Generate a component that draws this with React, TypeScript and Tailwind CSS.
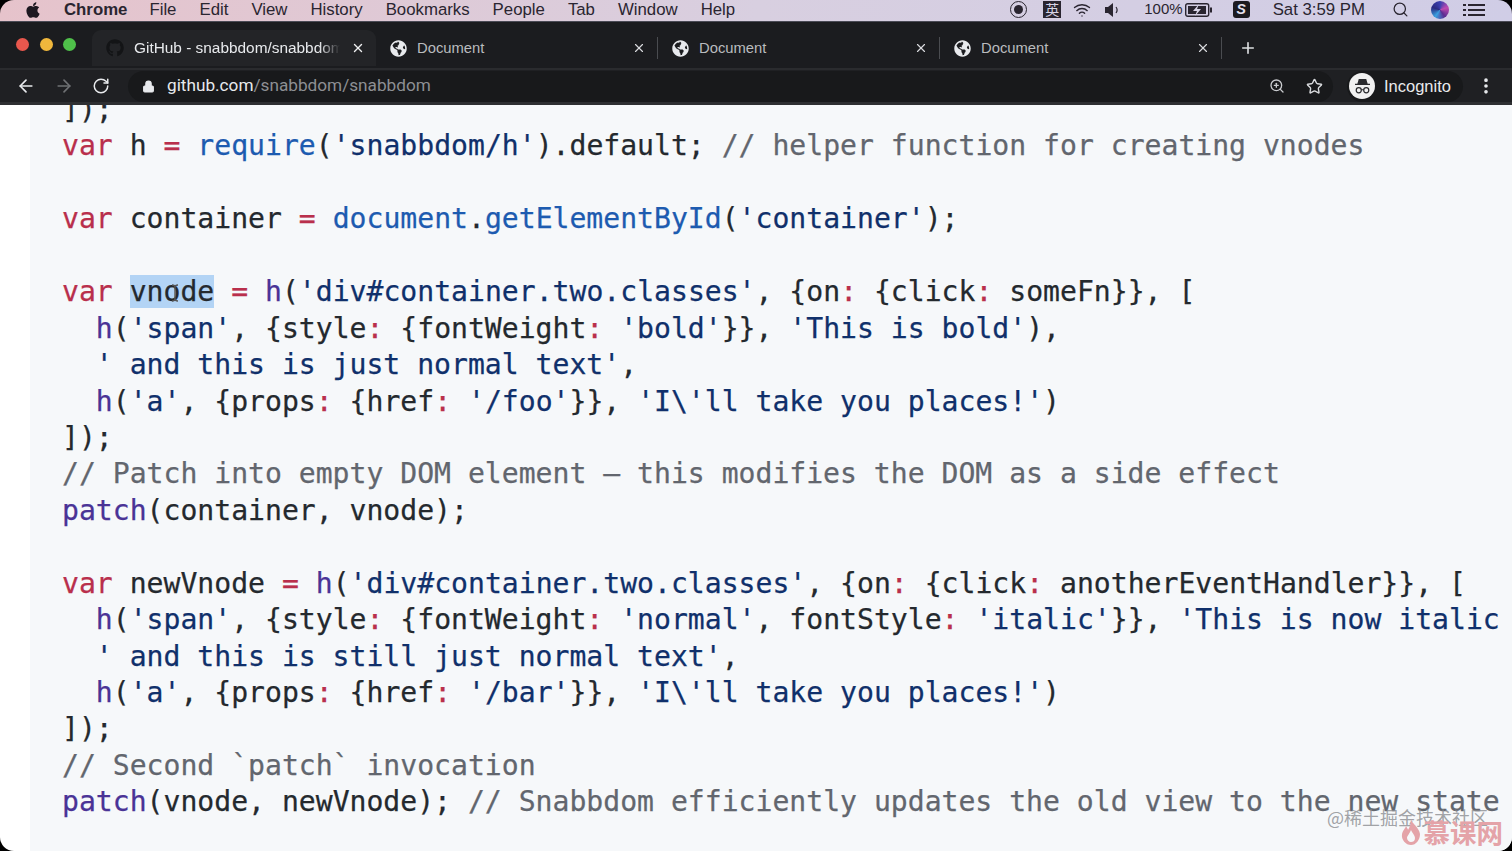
import { ArrowLeft, ArrowRight, Lock, MoreVertical, Plus, RotateCw, Search, Star, Wifi, X, ZoomIn } from 'lucide-react';
import { FaApple, FaGithub, FaGlobeAmericas } from 'react-icons/fa';

const kw = 'text-[#b92f4c]';
const fn = 'text-[#1d5bb0]';
const ent = 'text-[#4a3396]';
const str = 'text-[#10306b]';
const com = 'text-[#62666e]';

type Tok = [string, string?];

const lines: Tok[][] = [
	[[']);']],
	[['var', kw], [' h '], ['=', kw], [' '], ['require', fn], ['('], ["'snabbdom/h'", str], [').default; '], ['// helper function for creating vnodes', com]],
	[],
	[['var', kw], [' container '], ['=', kw], [' '], ['document', fn], ['.'], ['getElementById', fn], ['('], ["'container'", str], [');']],
	[],
	[['var', kw], [' '], ['vnode', 'SEL'], [' '], ['=', kw], [' '], ['h', ent], ['('], ["'div#container.two.classes'", str], [', {on'], [':', kw], [' {click'], [':', kw], [' someFn}}, [']],
	[['  '], ['h', ent], ['('], ["'span'", str], [', {style'], [':', kw], [' {fontWeight'], [':', kw], [' '], ["'bold'", str], ['}}, '], ["'This is bold'", str], ['),']],
	[['  '], ["' and this is just normal text'", str], [',']],
	[['  '], ['h', ent], ['('], ["'a'", str], [', {props'], [':', kw], [' {href'], [':', kw], [' '], ["'/foo'", str], ['}}, '], ["'I\\'ll take you places!'", str], [')']],
	[[']);']],
	[['// Patch into empty DOM element — this modifies the DOM as a side effect', com]],
	[['patch', ent], ['(container, vnode);']],
	[],
	[['var', kw], [' newVnode '], ['=', kw], [' '], ['h', ent], ['('], ["'div#container.two.classes'", str], [', {on'], [':', kw], [' {click'], [':', kw], [' anotherEventHandler}}, [']],
	[['  '], ['h', ent], ['('], ["'span'", str], [', {style'], [':', kw], [' {fontWeight'], [':', kw], [' '], ["'normal'", str], [', fontStyle'], [':', kw], [' '], ["'italic'", str], ['}}, '], ["'This is now italic", str]],
	[['  '], ["' and this is still just normal text'", str], [',']],
	[['  '], ['h', ent], ['('], ["'a'", str], [', {props'], [':', kw], [' {href'], [':', kw], [' '], ["'/bar'", str], ['}}, '], ["'I\\'ll take you places!'", str], [')']],
	[[']);']],
	[['// Second `patch` invocation', com]],
	[['patch', ent], ['(vnode, newVnode); '], ['// Snabbdom efficiently updates the old view to the new state', com]],
];

function MenuBar() {
	const left = ['File', 'Edit', 'View', 'History', 'Bookmarks', 'People', 'Tab', 'Window', 'Help'];
	return (
		<div className="h-[21px] shrink-0 flex items-center justify-between pb-[2px] bg-gradient-to-r from-[#e6c3cb] via-[#d8cfe0] to-[#d0cde6] text-[16.8px] text-[#2a2530]">
			<div className="flex items-center">
				<FaApple className="w-[18px] h-[18px] ml-[24px] text-[#1d1820]" />
				<span className="ml-[22px] font-bold">Chrome</span>
				<div className="flex items-center gap-[23px] ml-[22px]">
					{left.map((item) => (
						<span key={item}>{item}</span>
					))}
				</div>
			</div>
			<div className="flex items-center pr-[27px]">
				<span className="w-[17px] h-[17px] rounded-full border border-[#2a2530] flex items-center justify-center">
					<span className="w-[9px] h-[9px] rounded-full bg-[#2a2530]" />
				</span>
				<span className="ml-[16px] w-[18px] h-[17px] bg-[#2a2530] text-[#d8d4e6] text-[14px] leading-[17px] text-center font-['Noto_Sans_CJK_SC',sans-serif]">英</span>
				<Wifi className="ml-[9px] w-[24px] h-[18px]" strokeWidth={1.8} />
				<svg viewBox="0 0 16 14" className="ml-[11px] w-[16px] h-[14px]">
					<path d="M0 4h3l5-4v14l-5-4H0z" fill="#2a2530" />
					<path d="M11 4c1.5 2 1.5 4 0 6" fill="none" stroke="#2a2530" strokeWidth="1.2" />
				</svg>
				<span className="ml-[23px] text-[15px]">100%</span>
				<svg viewBox="0 0 28 14" className="ml-[2px] w-[28px] h-[14px]">
					<rect x="0.7" y="0.7" width="23" height="12.6" rx="2" fill="none" stroke="#2a2530" strokeWidth="1.4" />
					<rect x="25" y="4.5" width="2" height="5" fill="#2a2530" />
					<rect x="3" y="3" width="18" height="8" fill="#2a2530" />
					<path d="M14 1 8 8h4l-2 5 6-7h-4z" fill="#d8d4e6" />
				</svg>
				<span className="ml-[20px] w-[17px] h-[17px] rounded-[3px] bg-[#1c1a20] text-[#e4e0ee] text-[14px] leading-[17px] text-center font-bold italic">S</span>
				<span className="ml-[23px]">Sat 3:59 PM</span>
				<Search className="ml-[27px] w-[17px] h-[17px]" strokeWidth={1.8} />
				<span className="ml-[22px] w-[18px] h-[18px] rounded-full bg-[conic-gradient(#3a3fb0,#c04ab0,#5a2c90,#3aa0e0,#2a2a80,#3a3fb0)]" />
				<svg viewBox="0 0 22 14" className="ml-[14px] w-[22px] h-[14px]" fill="#2a2530">
					<rect x="0" y="1" width="3" height="2" />
					<rect x="5" y="1" width="17" height="2" />
					<rect x="0" y="6" width="3" height="2" />
					<rect x="5" y="6" width="17" height="2" />
					<rect x="0" y="11" width="3" height="2" />
					<rect x="5" y="11" width="17" height="2" />
				</svg>
			</div>
		</div>
	);
}

function DocTab() {
	return (
		<div className="relative w-[282px] h-[36px] shrink-0 flex items-center pl-[14px] text-[14.8px] text-[#b9bbbe]">
			<FaGlobeAmericas className="w-[17px] h-[17px] text-[#e8eaed]" />
			<span className="ml-[10px]">Document</span>
			<X className="absolute right-[12px] top-[11px] w-[14px] h-[14px] text-[#d8dadd]" strokeWidth={2} />
			<span className="absolute right-0 top-[7px] w-px h-[22px] bg-[#4a4c50]" />
		</div>
	);
}

function TabStrip() {
	return (
		<div className="h-[47px] shrink-0 flex items-end pb-[2px] bg-[#1b1c1f] border-t border-[#4a4a55]">
			<div className="flex items-center gap-[10.5px] self-start mt-[16px] ml-[16px] w-[76px]">
				<span className="w-[13px] h-[13px] rounded-full bg-[#e8574d]" />
				<span className="w-[13px] h-[13px] rounded-full bg-[#f0b73c]" />
				<span className="w-[13px] h-[13px] rounded-full bg-[#4fc04a]" />
			</div>
			<div className="relative w-[284px] h-[36px] shrink-0 flex items-center pl-[14px] bg-[#232427] rounded-t-[9px] text-[15.4px] text-[#e8eaed]">
				<FaGithub className="w-[18px] h-[18px] text-[#131416]" />
				<span className="ml-[10px] w-[206px] overflow-hidden whitespace-nowrap [mask-image:linear-gradient(to_right,black_90%,transparent)]">GitHub - snabbdom/snabbdom</span>
				<X className="absolute right-[11px] top-[11px] w-[14px] h-[14px] text-[#f0f1f2]" strokeWidth={2.4} />
			</div>
			<DocTab />
			<DocTab />
			<DocTab />
			<Plus className="ml-[17px] mb-[9px] w-[18px] h-[18px] text-[#dcdee0]" strokeWidth={2.2} />
		</div>
	);
}

function Toolbar() {
	return (
		<div className="h-[37px] shrink-0 flex items-center bg-[#1f2023] border-t-[2px] border-t-[#2a2b2e] border-b-[3px] border-b-[#2e2f32]">
			<ArrowLeft className="ml-[16px] w-[20px] h-[20px] text-[#e8eaed]" strokeWidth={2} />
			<ArrowRight className="ml-[18px] w-[20px] h-[20px] text-[#6f7174]" strokeWidth={2} />
			<RotateCw className="ml-[18px] w-[18px] h-[18px] text-[#e8eaed]" strokeWidth={2} />
			<div className="ml-[18px] w-[1205px] h-[31px] flex items-center rounded-full bg-[#18191b]">
				<Lock className="ml-[14px] w-[13px] h-[13px] text-[#e8eaed] fill-[#e8eaed]" />
				<span className="ml-[12px] text-[17.2px] font-['Roboto',sans-serif] text-[#e8eaed]">
					github.com<span className="text-[#8d8f93]">/snabbdom/snabbdom</span>
				</span>
				<ZoomIn className="ml-auto w-[16px] h-[16px] text-[#c8cacd]" strokeWidth={2} />
				<Star className="ml-[21px] mr-[10px] w-[17px] h-[17px] text-[#d8dadd]" strokeWidth={2} />
			</div>
			<div className="ml-[14px] w-[116px] h-[31px] flex items-center rounded-full bg-[#18191b] text-[16.5px] text-[#e8eaed]">
				<span className="ml-[2px] w-[26px] h-[26px] rounded-full bg-[#f1f1f1] flex items-center justify-center">
					<svg viewBox="0 0 20 16" className="w-[19px] h-[15px]" fill="#2a2b2e">
						<path d="M6 0h8l1.5 5H18v1.4H2V5h2.5z" />
						<circle cx="6" cy="12" r="2.7" fill="none" stroke="#2a2b2e" strokeWidth="1.3" />
						<circle cx="14" cy="12" r="2.7" fill="none" stroke="#2a2b2e" strokeWidth="1.3" />
						<path d="M8.6 11.5h2.8" stroke="#2a2b2e" strokeWidth="1.2" />
					</svg>
				</span>
				<span className="ml-[9px]">Incognito</span>
			</div>
			<MoreVertical className="ml-[13px] w-[20px] h-[20px] text-[#e8eaed]" strokeWidth={2.4} />
		</div>
	);
}

function CodeBlock() {
	return (
		<div className="flex-1 min-h-0 overflow-hidden bg-white pl-[30px] relative">
			<pre className="h-[calc(100%+13px)] bg-[#f6f8fa] pl-[32px] -mt-[13px] text-[28.1px] leading-[36.45px] text-[#24292e] font-['DejaVu_Sans_Mono',monospace] whitespace-pre [-webkit-text-stroke:0.25px]">
				{lines.map((line, i) => (
					<div key={i} className="h-[36.45px]">
						{line.map(([text, cls], j) =>
							cls === 'SEL' ? (
								<span key={j} className="bg-[#b3d4f5]">{text}</span>
							) : (
								<span key={j} className={cls}>{text}</span>
							),
						)}
					</div>
				))}
			</pre>
			{/* text cursor over the selection */}
			<svg viewBox="0 0 10 18" className="absolute left-[170px] top-[179px] w-[10px] h-[18px]" fill="none" stroke="#555" strokeWidth="1.4">
				<path d="M2 1c2 0 3 1 3 2v12c0 1-1 2-3 2M8 1c-2 0-3 1-3 2v12c0 1 1 2 3 2" />
			</svg>
			<div className="absolute right-[24px] bottom-[23px] text-[18px] leading-[22px] text-[#8a8c90]/80 font-['Noto_Sans_CJK_SC',sans-serif]">@稀土掘金技术社区</div>
			<div className="absolute right-[9px] bottom-[4px] flex items-center gap-[3px]">
				<svg viewBox="0 0 20 26" className="w-[20px] h-[26px]">
					<path d="M10 0c1 5 8 8 9 15 0 6-4 11-9 11S0 21 1 15c1-4 3-5 4-8 1 2 2 3 2 4 2-3 3-7 3-11z" fill="#e4a3a8" />
					<path d="M10 11c1 3 4 5 4 8s-2 4-4 4-4-2-4-4 3-5 4-8z" fill="#f6f8fa" />
				</svg>
				<span className="text-[26.5px] leading-[30px] font-bold text-[#e4a3a8] font-['Noto_Sans_CJK_SC',sans-serif]">慕课网</span>
			</div>
		</div>
	);
}

export default function App() {
	return (
		<div className="w-[1512px] h-[851px] bg-black overflow-hidden">
			<div className="w-full h-full flex flex-col overflow-hidden rounded-[14px] font-['Liberation_Sans',sans-serif]">
				<MenuBar />
				<TabStrip />
				<Toolbar />
				<CodeBlock />
			</div>
		</div>
	);
}
